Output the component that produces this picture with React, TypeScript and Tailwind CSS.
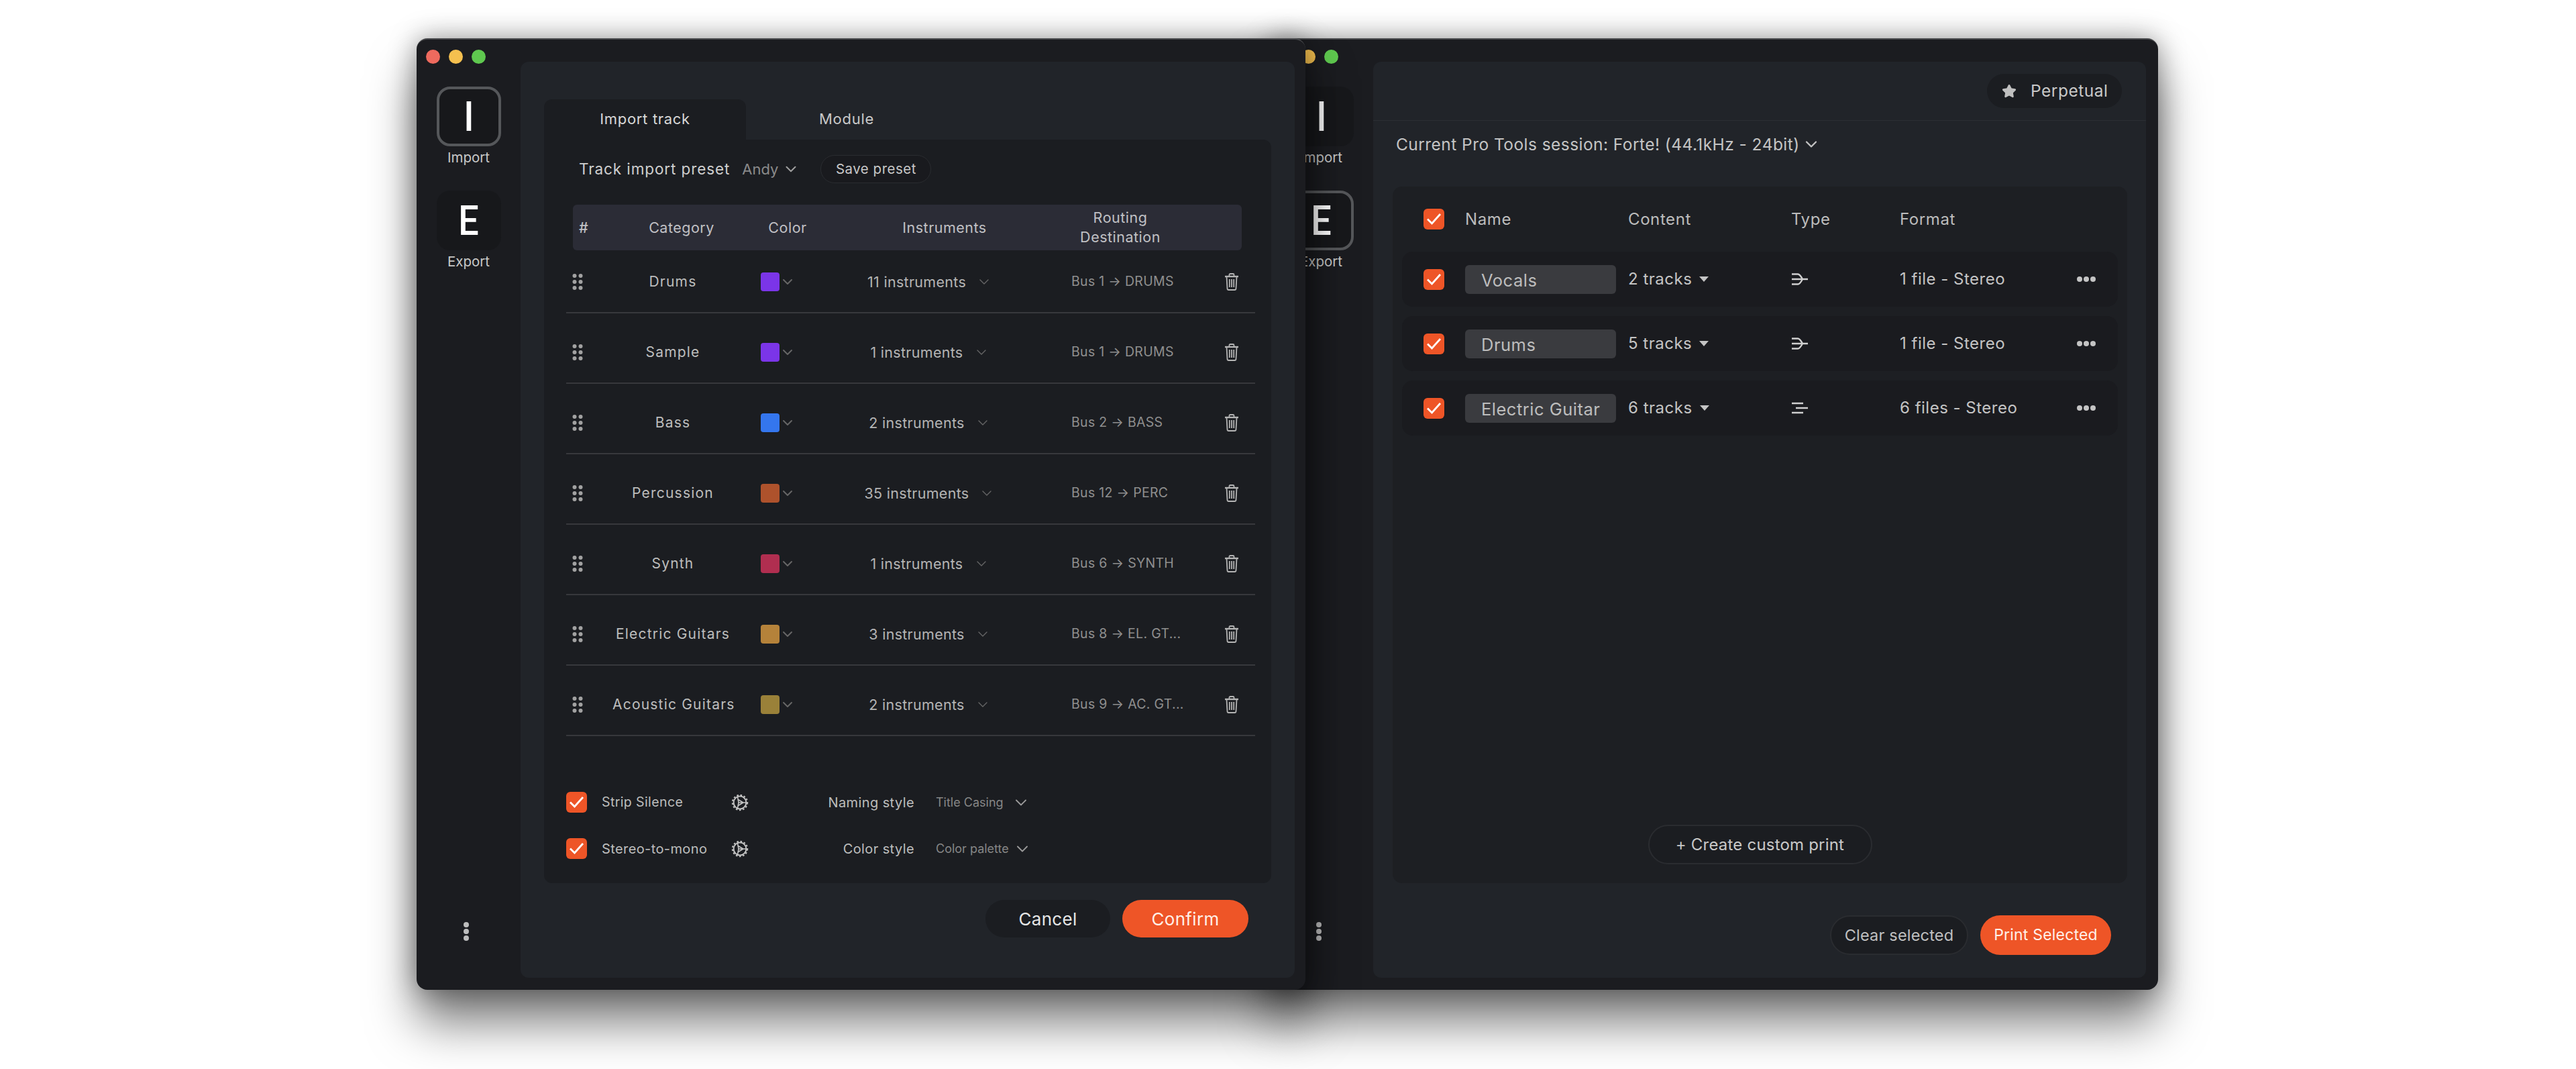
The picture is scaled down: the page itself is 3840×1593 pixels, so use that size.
import { ChevronDown, Star } from "lucide-react"

const tracks = [
  { name: "Drums", color: "bg-[#7b35e8]", count: "11 instruments", bus: "Bus 1 → DRUMS" },
  { name: "Sample", color: "bg-[#7b35e8]", count: "1 instruments", bus: "Bus 1 → DRUMS" },
  { name: "Bass", color: "bg-[#3476ee]", count: "2 instruments", bus: "Bus 2 → BASS" },
  { name: "Percussion", color: "bg-[#ae522c]", count: "35 instruments", bus: "Bus 12 → PERC" },
  { name: "Synth", color: "bg-[#b02e50]", count: "1 instruments", bus: "Bus 6 → SYNTH" },
  { name: "Electric Guitars", color: "bg-[#b5823a]", count: "3 instruments", bus: "Bus 8 → EL. GT..." },
  { name: "Acoustic Guitars", color: "bg-[#9a8139]", count: "2 instruments", bus: "Bus 9 → AC. GT..." },
]

const prints = [
  { name: "Vocals", content: "2 tracks", format: "1 file - Stereo", split: false },
  { name: "Drums", content: "5 tracks", format: "1 file - Stereo", split: false },
  { name: "Electric Guitar", content: "6 tracks", format: "6 files - Stereo", split: true },
]

function CheckBox() {
  return (
    <div className="flex h-[31px] w-[31px] shrink-0 items-center justify-center rounded-[6px] bg-[#ee5527]">
      <svg width="23" height="19" viewBox="0 0 23 19" fill="none" stroke="white" strokeWidth="2.8">
        <path d="M2 9.5 L8.5 16 L21 2" />
      </svg>
    </div>
  )
}

function DragDots() {
  return (
    <svg width="16" height="24" viewBox="0 0 16 24" fill="#a2a2a2" className="shrink-0">
      <circle cx="3.5" cy="3" r="3" />
      <circle cx="12.5" cy="3" r="3" />
      <circle cx="3.5" cy="12" r="3" />
      <circle cx="12.5" cy="12" r="3" />
      <circle cx="3.5" cy="21" r="3" />
      <circle cx="12.5" cy="21" r="3" />
    </svg>
  )
}

function TrashIcon() {
  return (
    <svg width="22" height="26" viewBox="0 0 22 26" fill="none" stroke="#b4b4b4" strokeWidth="1.8" className="shrink-0">
      <path d="M1 5 H21" strokeWidth="2.4" />
      <path d="M7.5 4.5 V2.5 Q7.5 1 9 1 H13 Q14.5 1 14.5 2.5 V4.5" />
      <path d="M3.5 5.5 L4.5 23 Q4.6 25 6.5 25 H15.5 Q17.4 25 17.5 23 L18.5 5.5" />
      <path d="M7.8 9 V21 M11 9 V21 M14.2 9 V21" />
    </svg>
  )
}

function GearPlay() {
  return (
    <svg width="26" height="26" viewBox="0 0 26 26" fill="none" stroke="#c4c4c4" className="shrink-0">
      <circle cx="13" cy="13" r="9.4" strokeWidth="2" />
      <circle cx="13" cy="13" r="11.2" strokeWidth="2" strokeDasharray="2.6 2.7" />
      <path d="M9.5 4.5 L11 13 L9.5 21.5 M11 13 L22 13 M9.5 8 L18 13 L9.5 18" strokeWidth="1.6" />
    </svg>
  )
}

function MergeIcon({ split }: { split: boolean }) {
  if (split) {
    return (
      <svg width="25" height="18" viewBox="0 0 25 18" fill="none" stroke="#d0d0d0" strokeWidth="2.6">
        <path d="M0 2 H17 M6 9 H24 M0 16 H17" />
      </svg>
    )
  }
  return (
    <svg width="25" height="18" viewBox="0 0 25 18" fill="none" stroke="#d0d0d0" strokeWidth="2.4">
      <path d="M0 1.5 H9 Q12 1.5 16 9 Q12 16.5 9 16.5 H0 M0 9 H24" />
    </svg>
  )
}

function TrafficLights() {
  return (
    <div className="ml-[14px] mt-[15px] flex gap-[13px]">
      <div className="h-[21px] w-[21px] rounded-full bg-[#ee6a5e]" />
      <div className="h-[21px] w-[21px] rounded-full bg-[#f5c04f]" />
      <div className="h-[21px] w-[21px] rounded-full bg-[#5fc84f]" />
    </div>
  )
}

function SideButton({ letter, label, active }: { letter: string; label: string; active: boolean }) {
  return (
    <div className="flex flex-col items-center">
      <div
        className={
          active
            ? "flex h-[89px] w-[96px] items-center justify-center rounded-[20px] border-[4px] border-[#55575a] bg-[#17181b]"
            : "flex h-[89px] w-[96px] items-center justify-center rounded-[20px] bg-[#17181b]"
        }
      >
        <span className="scale-x-[0.87] text-[62px] leading-none font-medium text-white [font-family:Roboto,sans-serif]">{letter}</span>
      </div>
      <span className="mt-[5px] text-[20.5px] leading-[24px] text-[#c8c8c8]">{label}</span>
    </div>
  )
}

function Sidebar({ active }: { active: string }) {
  return (
    <div className="flex w-[155px] shrink-0 flex-col">
      <TrafficLights />
      <div className="mt-[34px] flex flex-col items-center gap-[37px]">
        <SideButton letter="I" label="Import" active={active === "I"} />
        <SideButton letter="E" label="Export" active={active === "E"} />
      </div>
      <div className="mt-auto mb-[73px] flex flex-col items-center gap-[2px] pr-[7px]">
        <div className="h-[8px] w-[8px] rounded-full bg-[#bdbdbd]" />
        <div className="h-[8px] w-[8px] rounded-full bg-[#bdbdbd]" />
        <div className="h-[8px] w-[8px] rounded-full bg-[#bdbdbd]" />
      </div>
    </div>
  )
}

function ImportWindow() {
  return (
    <div className="relative z-10 flex h-[1418px] w-[1325px] shrink-0 rounded-[16px] border-t-2 border-[#4a4b4e] bg-[#1b1c20] shadow-[0_0_40px_rgba(0,0,0,0.4),0_50px_70px_rgba(0,0,0,0.5)]">
      <Sidebar active="I" />
      <div className="mt-[33px] mr-[16px] mb-[18px] flex flex-1 flex-col rounded-[12px] bg-[#212429] pt-[56px] pr-[35px] pl-[35px]">
        <div className="flex h-[60px] items-stretch text-[22px] tracking-[0.7px]">
          <div className="flex w-[301px] items-center justify-center rounded-t-[12px] bg-[#1b1d21] pb-[2px] text-[#d8d8d8]">Import track</div>
          <div className="flex w-[300px] items-center justify-center pb-[2px] text-[#c8c8c8]">Module</div>
        </div>
        <div className="flex h-[1108px] flex-col rounded-b-[12px] rounded-tr-[12px] bg-[#1b1d21] pt-[23px] pr-[24px] pl-[33px]">
          <div className="ml-[19px] flex h-[42px] items-center">
            <span className="text-[22.5px] tracking-[0.9px] text-[#cfcfcf]">Track import preset</span>
            <span className="ml-[18px] text-[22px] text-[#8a8a8a]">Andy</span>
            <ChevronDown className="ml-[6px] h-[26px] w-[26px] shrink-0 text-[#a0a0a0]" strokeWidth={1.8} />
            <div className="ml-[31px] flex h-[42px] w-[165px] items-center justify-center rounded-full border border-[#2a2c30] bg-[#191a1e] text-[20.5px] tracking-[0.5px] text-[#c8c8c8]">
              Save preset
            </div>
          </div>

          <div className="mt-[32px] ml-[10px] flex h-[68px] w-[997px] items-center rounded-[6px] bg-[#2b2c36] pl-[9px] text-[21.5px] tracking-[0.5px] text-[#c0c0c4]">
            <span className="w-[20px] font-medium">#</span>
            <span className="ml-[53px] w-[160px] text-center">Category</span>
            <span className="ml-[38px] w-[80px] text-center">Color</span>
            <span className="ml-[94px] w-[200px] text-center">Instruments</span>
            <span className="ml-[82px] w-[160px] text-center leading-[29px]">Routing Destination</span>
          </div>

          <div className="mt-[2px] flex flex-col gap-[13px]">
            {tracks.map((t) => (
              <div key={t.name} className="flex h-[92px] items-center border-b-2 border-[#37383c] pl-[9px]">
                <DragDots />
                <span className="ml-[44px] w-[180px] text-center text-[21px] tracking-[1.2px] whitespace-nowrap text-[#bdbdbd]">{t.name}</span>
                <div className="ml-[41px] flex w-[50px] items-center">
                  <div className={`h-[28px] w-[28px] shrink-0 rounded-[4px] ${t.color}`} />
                  <ChevronDown className="h-[24px] w-[24px] shrink-0 text-[#666666]" strokeWidth={2} />
                </div>
                <div className="ml-[92px] flex w-[220px] items-center justify-center text-[#b4b4b4]">
                  <span className="text-[21.5px] tracking-[0.3px]">{t.count}</span>
                  <ChevronDown className="ml-[15px] h-[24px] w-[24px] shrink-0 text-[#666666]" strokeWidth={1.4} />
                </div>
                <span className="ml-[101px] w-[172px] text-[19.5px] tracking-[0.3px] whitespace-nowrap text-[#8f8f8f]">{t.bus}</span>
                <div className="ml-[56px]">
                  <TrashIcon />
                </div>
              </div>
            ))}
          </div>

          <div className="mt-[83px] flex items-center">
            <CheckBox />
            <span className="ml-[22px] w-[193px] text-[19.5px] tracking-[0.4px] text-[#bdbdbd]">Strip Silence</span>
            <GearPlay />
            <span className="ml-[1px] w-[246px] text-right text-[20px] tracking-[0.4px] text-[#bdbdbd]">Naming style</span>
            <span className="ml-[32px] text-[18px] text-[#868686]">Title Casing</span>
            <ChevronDown className="ml-[12px] h-[28px] w-[28px] shrink-0 text-[#9a9a9a]" strokeWidth={1.6} />
          </div>
          <div className="mt-[38px] flex items-center">
            <CheckBox />
            <span className="ml-[22px] w-[193px] text-[20px] tracking-[0.4px] text-[#bdbdbd]">Stereo-to-mono</span>
            <GearPlay />
            <span className="ml-[1px] w-[246px] text-right text-[20px] tracking-[0.4px] text-[#bdbdbd]">Color style</span>
            <span className="ml-[32px] text-[18px] text-[#868686]">Color palette</span>
            <ChevronDown className="ml-[6px] h-[28px] w-[28px] shrink-0 text-[#9a9a9a]" strokeWidth={1.6} />
          </div>
        </div>
        <div className="mt-[25px] flex justify-end gap-[18px] pr-[34px]">
          <div className="flex h-[56px] w-[186px] items-center justify-center rounded-full bg-[#1b1d21] text-[26px] tracking-[0.3px] text-[#e6e6e6]">
            Cancel
          </div>
          <div className="flex h-[56px] w-[188px] items-center justify-center rounded-full bg-[#ee5527] text-[26px] tracking-[0.3px] text-[#fff0e8]">
            Confirm
          </div>
        </div>
      </div>
    </div>
  )
}

function ExportWindow() {
  return (
    <div className="-ml-[54px] flex h-[1418px] w-[1325px] shrink-0 rounded-[16px] border-t-2 border-[#4a4b4e] bg-[#1b1c20] shadow-[0_0_40px_rgba(0,0,0,0.4),0_50px_70px_rgba(0,0,0,0.5)]">
      <Sidebar active="E" />
      <div className="mt-[33px] mr-[18px] mb-[18px] flex flex-1 flex-col rounded-[12px] bg-[#212429]">
        <div className="flex h-[88px] items-center justify-end border-b border-[#2b2e33] pr-[36px]">
          <div className="flex h-[51px] w-[201px] items-center rounded-full bg-[#1b1d21] pl-[22px] text-[#c8c8c8]">
            <Star className="h-[22px] w-[22px] fill-[#c0c0c0] text-[#c0c0c0]" />
            <span className="ml-[21px] text-[24.5px] tracking-[0.5px]">Perpetual</span>
          </div>
        </div>
        <div className="mt-[20px] ml-[34px] flex h-[30px] items-center text-[#c4c4c4]">
          <span className="text-[24.5px] tracking-[0.45px] whitespace-nowrap">Current Pro Tools session: Forte! (44.1kHz - 24bit)</span>
          <ChevronDown className="ml-[3px] h-[28px] w-[28px] shrink-0" strokeWidth={2} />
        </div>
        <div className="mt-[48px] mr-[28px] ml-[29px] flex h-[1038px] flex-col rounded-[14px] bg-[#1d1f23] pr-[14px] pl-[14px]">
          <div className="mt-[33px] flex h-[31px] items-center pl-[32px] text-[24px] tracking-[0.6px] text-[#bcbcbc]">
            <CheckBox />
            <span className="ml-[31px] w-[243px]">Name</span>
            <span className="w-[243px]">Content</span>
            <span className="w-[162px]">Type</span>
            <span>Format</span>
          </div>
          <div className="mt-[33px] flex flex-col gap-[14px]">
            {prints.map((p) => (
              <div key={p.name} className="flex h-[82px] items-center rounded-[16px] bg-[#1a1b1f] pl-[32px] text-[24px] tracking-[0.5px] text-[#c4c4c4]">
                <CheckBox />
                <div className="ml-[31px] flex h-[43px] w-[225px] shrink-0 items-center rounded-[6px] bg-[#3a3b3f] pl-[24px] text-[#bdbdbd]">
                  <span className="translate-y-[2px] text-[25.5px] tracking-[0.5px] whitespace-nowrap">{p.name}</span>
                </div>
                <div className="ml-[18px] flex w-[244px] shrink-0 items-center">
                  <span>{p.content}</span>
                  <span className="ml-[11px] h-0 w-0 border-x-[7px] border-t-[8px] border-x-transparent border-t-[#c4c4c4]" />
                </div>
                <div className="w-[161px] shrink-0">
                  <MergeIcon split={p.split} />
                </div>
                <span className="w-[264px] shrink-0 whitespace-nowrap">{p.format}</span>
                <div className="flex gap-[2px]">
                  <div className="h-[8px] w-[8px] rounded-full bg-[#c4c4c4]" />
                  <div className="h-[8px] w-[8px] rounded-full bg-[#c4c4c4]" />
                  <div className="h-[8px] w-[8px] rounded-full bg-[#c4c4c4]" />
                </div>
              </div>
            ))}
          </div>
          <div className="mt-auto mb-[28px] flex justify-center">
            <div className="flex h-[59px] w-[334px] items-center justify-center rounded-full border-2 border-[#2a2c30] bg-[#1b1d21] text-[24px] tracking-[0.2px] text-[#c8c8c8]">
              + Create custom print
            </div>
          </div>
        </div>
        <div className="mt-[48px] flex justify-end gap-[18px] pr-[52px]">
          <div className="flex h-[59px] w-[206px] items-center justify-center rounded-full border-2 border-[#2a2c30] bg-[#1b1d21] text-[23.5px] tracking-[0.2px] text-[#c0c0c0]">
            Clear selected
          </div>
          <div className="flex h-[59px] w-[195px] items-center justify-center rounded-full bg-[#ee5527] text-[23px] tracking-[0.2px] text-[#fff0e8]">
            Print Selected
          </div>
        </div>
      </div>
    </div>
  )
}

export default function App() {
  return (
    <div className="flex h-[1593px] w-[3840px] overflow-hidden bg-white pt-[57px] pl-[621px] [font-family:Inter,sans-serif]">
      <ImportWindow />
      <ExportWindow />
    </div>
  )
}
